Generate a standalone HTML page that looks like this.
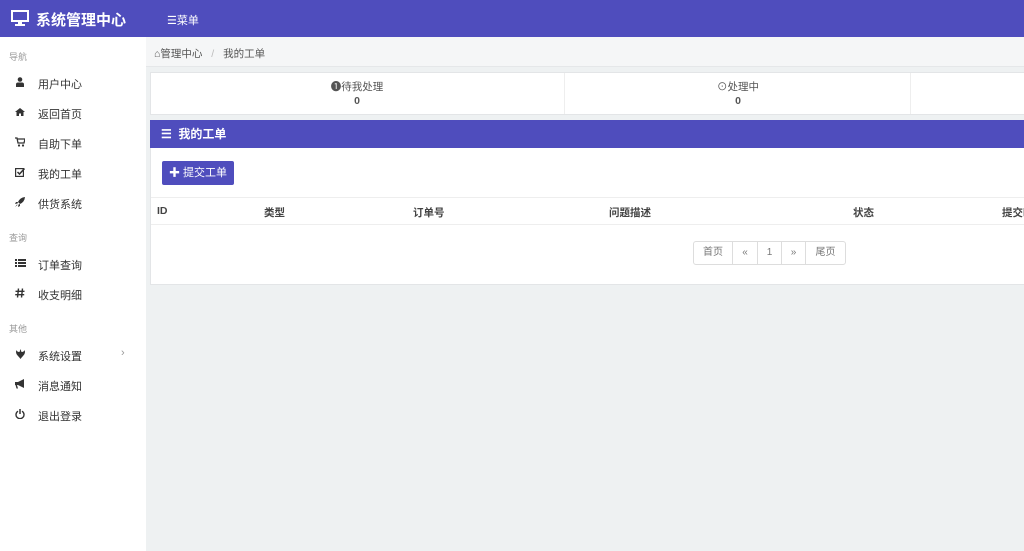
<!DOCTYPE html><html><head><meta charset="utf-8"><style>
*{box-sizing:border-box;margin:0;padding:0}
body{width:1024px;height:551px;overflow:hidden;font-family:"Liberation Sans","Noto Sans CJK SC",sans-serif;background:#eef1f2;position:relative;font-size:11px;color:#333}
.a{position:absolute}
.hd{left:0;top:0;width:1024px;height:37px;background:#4f4dbd;color:#fff}
.sb{left:0;top:37px;width:146px;height:514px;background:#fff}
.sec{position:absolute;left:9px;font-size:9px;color:#999}
.it{position:absolute;left:0;width:146px;height:20px;font-size:11px;color:#333}
.it svg{position:absolute;left:15px;top:4px}
.it span{position:absolute;left:38px;top:3px}
.th{position:absolute;top:205px;font-weight:bold;font-size:10.5px;color:#444;white-space:nowrap}
.pg{position:absolute;top:241px;height:24px;border:1px solid #ddd;background:#fff;color:#777;font-size:10px;text-align:center;line-height:22px}
</style></head><body>
<div class="a hd">
<svg class="a" style="left:11px;top:10px" width="18" height="16" viewBox="0 0 18 16"><rect x="1" y="1" width="16" height="10" fill="none" stroke="#fff" stroke-width="2"/><rect x="7" y="11" width="4" height="3" fill="#fff"/><rect x="4" y="14" width="10" height="2" fill="#fff"/></svg>
<div class="a" style="left:36px;top:9px;font-size:15px;font-weight:bold">系统管理中心</div>
<div class="a" style="left:167px;top:12px;font-size:11px">☰菜单</div>
</div>
<div class="a sb">
<div class="sec" style="top:13px">导航</div>
<div class="it" style="top:36px"><svg width="10" height="10" viewBox="0 0 10 10"><circle cx="5" cy="2.5" r="2.3" fill="#333"/><path d="M1 10V7.5Q1 5.5 3 5.5H7Q9 5.5 9 7.5V10Z" fill="#333"/></svg><span>用户中心</span></div>
<div class="it" style="top:66px"><svg width="10" height="10" viewBox="0 0 10 10"><path d="M0 5L5 1L10 5H8.5V9H6V6.5H4V9H1.5V5Z" fill="#333"/></svg><span>返回首页</span></div>
<div class="it" style="top:96px"><svg width="10" height="10" viewBox="0 0 10 10"><path d="M0 1H2L3 6H9L10 2H2.5" fill="none" stroke="#333" stroke-width="1.3"/><circle cx="4" cy="8.5" r="1.1" fill="#333"/><circle cx="8" cy="8.5" r="1.1" fill="#333"/></svg><span>自助下单</span></div>
<div class="it" style="top:126px"><svg width="10" height="10" viewBox="0 0 10 10"><rect x="0.6" y="1.6" width="7.8" height="7.8" fill="none" stroke="#333" stroke-width="1.2"/><path d="M2.5 5L4.5 7L9.5 1.5" fill="none" stroke="#333" stroke-width="1.5"/></svg><span>我的工单</span></div>
<div class="it" style="top:156px"><svg width="10" height="10" viewBox="0 0 10 10"><path d="M10 0Q5 0.5 3 5L5 7Q9.5 5 10 0ZM3 5L1 5L0 7L2.5 6.5ZM5 7L5 9L3 10L3.5 7.5ZM2 7.5L0 10L2.5 8Z" fill="#333"/></svg><span>供货系统</span></div>
<div class="sec" style="top:194px">查询</div>
<div class="it" style="top:217px"><svg width="11" height="10" viewBox="0 0 11 10"><path d="M0 1H2V3H0ZM0 4H2V6H0ZM0 7H2V9H0ZM3 1H11V3H3ZM3 4H11V6H3ZM3 7H11V9H3Z" fill="#333"/></svg><span>订单查询</span></div>
<div class="it" style="top:247px"><svg width="10" height="10" viewBox="0 0 10 10"><path d="M3.5 0.5L2.5 9.5M7.5 0.5L6.5 9.5M0.5 3.3H9.5M0.2 6.7H9.2" stroke="#333" stroke-width="1.4"/></svg><span>收支明细</span></div>
<div class="sec" style="top:285px">其他</div>
<div class="it" style="top:308px"><svg width="11" height="10" viewBox="0 0 11 10"><path d="M5.5 0L6.5 3Q9 3 9.5 1Q11 4 8 7Q6.5 8.5 5.5 10Q4.5 8.5 3 7Q0 4 1.5 1Q2 3 4.5 3Z" fill="#333"/></svg><span>系统设置</span><b style="position:absolute;left:121px;top:2px;font-weight:normal;color:#999">›</b></div>
<div class="it" style="top:338px"><svg width="10" height="10" viewBox="0 0 10 10"><path d="M0 3H3L9 0V9L3 6H2L3 9.5H1.5L0.5 6H0Z" fill="#333"/></svg><span>消息通知</span></div>
<div class="it" style="top:368px"><svg width="10" height="10" viewBox="0 0 10 10"><path d="M3 2.2A4 4 0 1 0 7 2.2" fill="none" stroke="#333" stroke-width="1.4"/><path d="M5 0V5" stroke="#333" stroke-width="1.5"/></svg><span>退出登录</span></div>
</div>
<div class="a" style="left:146px;top:37px;width:878px;height:30px;background:#f5f6f7;border-bottom:1px solid #e5e7e9"></div>
<div class="a" style="left:154px;top:46px;font-size:10.5px;color:#555">&#8962;管理中心 <span style="color:#bbb;margin:0 6px">/</span> 我的工单</div>
<div class="a" style="left:150px;top:72px;width:880px;height:43px;background:#fff;border:1px solid #e3e5e7"></div>
<div class="a" style="left:564px;top:73px;width:1px;height:41px;background:#eee"></div>
<div class="a" style="left:910px;top:73px;width:1px;height:41px;background:#eee"></div>
<div class="a" style="left:307px;top:80px;width:100px;text-align:center;font-size:10.5px;color:#555;line-height:14px">❶待我处理<br><b>0</b></div>
<div class="a" style="left:688px;top:80px;width:100px;text-align:center;font-size:10.5px;color:#555;line-height:14px">⊙处理中<br><b>0</b></div>
<div class="a" style="left:150px;top:120px;width:880px;height:165px;background:#fff;border:1px solid #e3e5e7"></div>
<div class="a" style="left:150px;top:120px;width:880px;height:28px;background:#4f4dbd;color:#fff;font-weight:bold;font-size:12px;line-height:28px;padding-left:11px">☰&nbsp; 我的工单</div>
<div class="a" style="left:162px;top:161px;width:72px;height:24px;background:#4f4dbd;border-radius:2px;color:#fff;font-size:11px;line-height:24px;text-align:center"><b>✚</b> 提交工单</div>
<div class="a" style="left:151px;top:197px;width:873px;height:1px;background:#eee"></div>
<div class="a" style="left:151px;top:224px;width:873px;height:1px;background:#eee"></div>
<div class="th" style="left:157px">ID</div>
<div class="th" style="left:264px">类型</div>
<div class="th" style="left:413px">订单号</div>
<div class="th" style="left:609px">问题描述</div>
<div class="th" style="left:853px">状态</div>
<div class="th" style="left:1002px">提交时间</div>
<div class="pg" style="left:693px;width:40px;border-radius:3px 0 0 3px">首页</div>
<div class="pg" style="left:732px;width:26px">«</div>
<div class="pg" style="left:757px;width:25px">1</div>
<div class="pg" style="left:781px;width:25px">»</div>
<div class="pg" style="left:805px;width:41px;border-radius:0 3px 3px 0">尾页</div>
</body></html>
